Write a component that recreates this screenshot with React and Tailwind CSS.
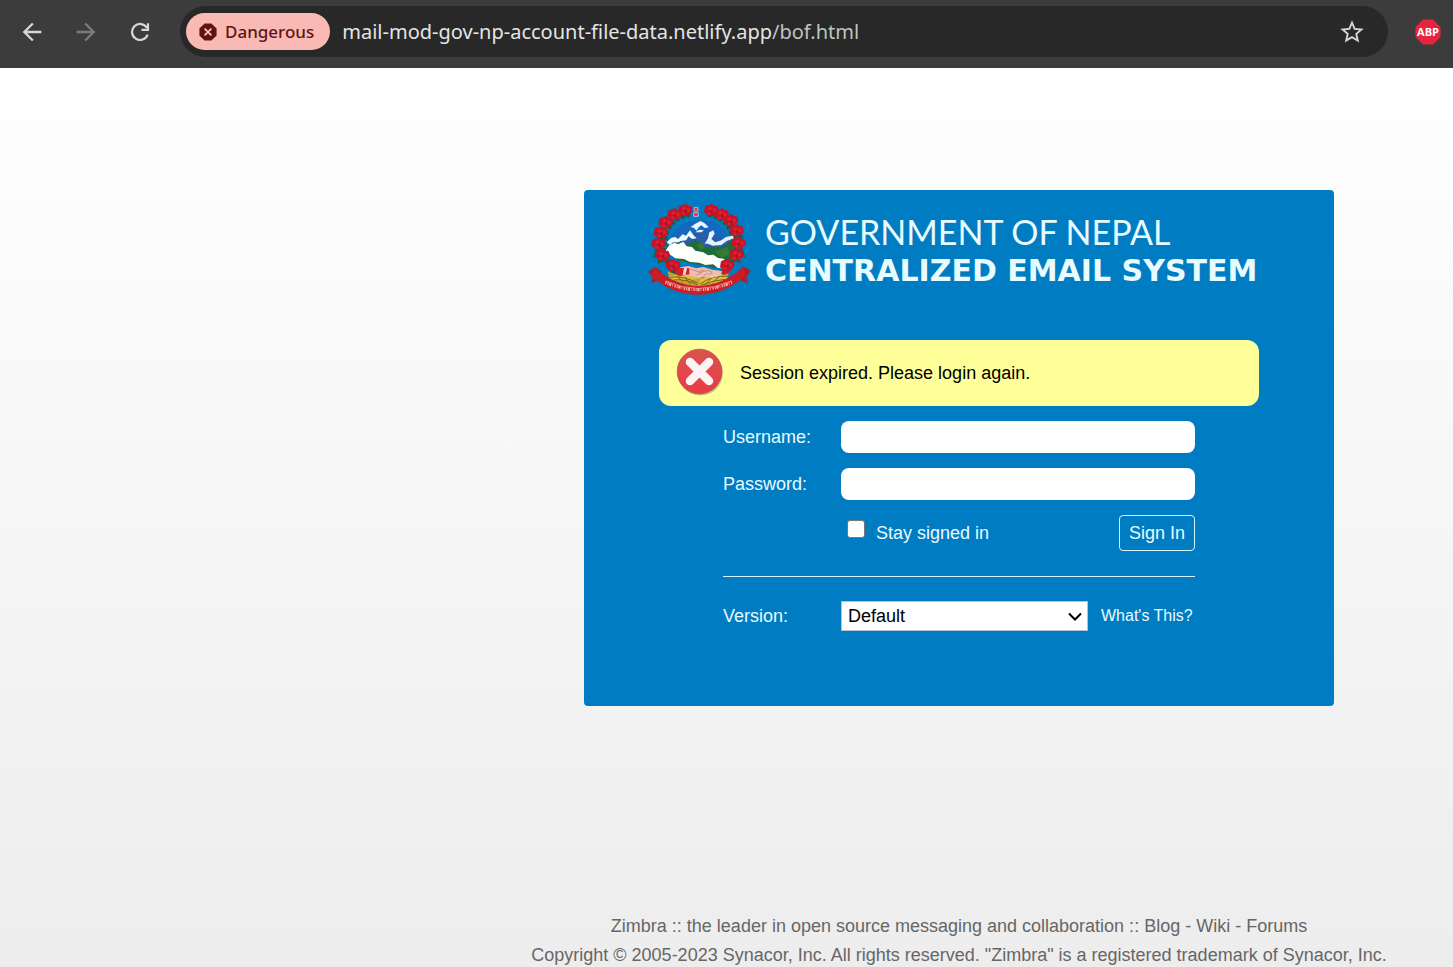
import { useState } from 'react';
import { MdArrowBack, MdArrowForward, MdStarBorder } from 'react-icons/md';

const FLOWERS = [
  [136, 47], [104, 60], [77, 84], [63, 114], [56, 148], [68, 182], [99, 212],
  [214, 47], [245, 60], [273, 78], [290, 108], [296, 146], [289, 181], [262, 212],
];

const ReloadIcon = () => (
  <svg width="20" height="20" viewBox="0 0 20 20" fill="none" stroke="currentColor" strokeWidth="2.2">
    <path d="M17.6 12.6A8 8 0 1 1 17 6" />
    <path d="M18 1.2V7.8H11.4" />
  </svg>
);

const DangerIcon = () => (
  <svg width="18" height="18" viewBox="0 0 18 18">
    <path d="M5.6 0.4h6.8l5.2 5.2v6.8l-5.2 5.2H5.6L0.4 12.4V5.6z" fill="#601410" />
    <path d="M5.6 5.6l6.8 6.8M12.4 5.6l-6.8 6.8" stroke="#f9b9b5" strokeWidth="2" />
  </svg>
);

const ErrorIcon = () => (
  <svg width="50" height="50" viewBox="0 0 50 50" className="shrink-0">
    <defs>
      <linearGradient id="disc" x1="0" y1="0" x2="0" y2="1">
        <stop offset="0" stopColor="#d9534f" />
        <stop offset="1" stopColor="#e83c46" />
      </linearGradient>
    </defs>
    <circle cx="25.5" cy="25" r="22.5" fill="#8a7a50" opacity="0.45" />
    <circle cx="24.5" cy="23.5" r="22.3" fill="url(#disc)" stroke="#c44a46" strokeWidth="0.8" />
    <path d="M15 14l19 19M34 14l-19 19" stroke="#fdf3f4" strokeWidth="8.5" strokeLinecap="round" />
  </svg>
);

const Flower = ({ x, y }) => (
  <g transform={`translate(${x} ${y}) scale(1.15)`}>
    <path d="M-17-10l6-5 5 1 7-4 7 5 7 1 4 9-2 8-6 3-3 7-9-3-6 3-5-7-7-3 1-8z" fill="#c41426" />
    <path d="M-10-6l8-5 4 6-5 6zM4-7l8 2 1 7-8 2zM-10 5l6-2 4 5-6 4z" fill="#e02032" />
    <path d="M-4 0l5-2 4 4-4 4z" fill="#a81222" />
  </g>
);

const Emblem = () => (
  <svg width="120" height="110" viewBox="0 0 360 330" className="shrink-0" role="img" aria-label="Emblem of Nepal">
    {/* wreath leaves */}
    <path
      d="M150 55Q96 64 78 110 60 160 92 214 102 234 128 238M204 55Q256 64 276 110 292 160 264 214 254 232 236 238"
      fill="none"
      stroke="#1f5c44"
      strokeWidth="20"
      strokeDasharray="13 5"
    />
    <path d="M46 162l-8 28 18-8-4 24 24-6-2-34zM308 160l8 28-18-8 4 24-24-6 4-34zM62 94l-16 34 20 4zM292 90l20 38-22 4z" fill="#245d48" />

    {/* mountains and hills */}
    <path d="M82 150C90 110 130 76 180 74s84 30 94 74l-6 44-96 20-84-26z" fill="#1468bd" />
    <path d="M88 140l22-16 24-4 16-14 12 12 16-18 14 12 18-8 14 18 20 8 26 6v18l-100 6z" fill="#2a5cac" />
    <path d="M152 96l14-10 16-8 12 7 12 12-12 2-10-8-8 6-6 10-8-8zM166 112l12-8 14 2-8 6z" fill="#eaf6ff" />
    <path d="M80 142l14-14 12-2 8 6 14-14 10 4 12-16 12 16 8 8-14 2-10-8-8 12-16 2-10 6-12-2-10 8z" fill="#eef8ff" />
    <path d="M194 146l10-16 4-18 12-6 4 10-10 16 12 10 18-6 14-10 20-4 4 8-22 8-16 12-26 2-14-6z" fill="#e4f3fd" />
    <path d="M146 146l20-10 18 4 12 18 30-4 18 4 34-24 6 38-8 40-46 8-118-24-32-42 28-12z" fill="#216b38" />
    <path d="M170 150l14-8 12 18-14 4zM222 170l40-14 8 22-24 10z" fill="#357a38" />
    <path d="M88 151l16-8 10 5 16-8 10 14 16 2 10 11 24 5 14 9 16-2 14 10 17 2 12 16-9 14-22-3-12-10-24 2-18-7-28-2-18-9-26-2-20-14-9-10z" fill="#fcfffc" />

    {/* wheat */}
    <path d="M83 229q92 40 184 0l-6 32q-86 40-172 0z" fill="#c6a12b" />
    <path d="M88 245q50-18 90 5-42 12-80 9zM178 256q35-26 85-14l-6 13q-34 13-76 10z" fill="#dfbd40" />
    <path d="M90 247q40-6 82 17M101 255q38-4 72 15M264 244q-46-4-82 22M255 253q-34 2-70 18M110 242l20 20M134 246l18 22M240 243l-22 20M216 248l-20 20" fill="none" stroke="#756321" strokeWidth="3" />

    {/* clasped hands */}
    <path d="M114 231l7-14 24-4 24 7 20-4 28 8 29 4-4 14-28 7-24-4-12 5-28-8-32-2z" fill="#efbeb2" />
    <path d="M151 222l24 8 18-6M176 233l28-7 12 6M170 241l15-8M191 242l14-8M206 239l12-5" fill="none" stroke="#cf8f84" strokeWidth="3" />
    <path d="M109 218l39 2v18l-30 6-14-10zM245 224l18-5 6 15-20 7z" fill="#d21d2c" />
    <path d="M132 218l9 1-4 20-9 2z" fill="#f5d6ce" />

    {FLOWERS.map(([x, y]) => (
      <Flower key={`${x}-${y}`} x={x} y={y} />
    ))}

    <path d="M162 38h12v10h-12zM161 53h14v11h-14z" fill="#ed2a46" stroke="#dde4ff" strokeWidth="2" />

    {/* ribbon */}
    <path d="M24 230l24-14 18 16-12 25-21 7 6-17zM332 227l-24-13-16 18 10 25 21 7-4-17z" fill="#b91722" />
    <path d="M42 219q67 53 132 54 68 0 138-57l4 26q-62 57-141 57-80 0-143-57z" fill="#c91d28" />
    <path d="M76 262q98 45 200 0" fill="none" stroke="#f3aca2" strokeWidth="8" strokeDasharray="4 3 3 2 7 3 2 5" />
    <path d="M78 258q96 45 196 0" fill="none" stroke="#f6c5ba" strokeWidth="2" />
  </svg>
);

const AdblockIcon = () => (
  <svg width="26" height="26" viewBox="0 0 26 26">
    <path d="M8 0.5h10L25.5 8v10L18 25.5H8L0.5 18V8z" fill="#e6243f" />
    <text x="13" y="17" textAnchor="middle" fill="#fff" className="font-['Open_Sans',sans-serif] text-[11px] font-bold">
      ABP
    </text>
  </svg>
);

const BrowserBar = () => (
  <header className="flex h-[68px] items-center bg-[#3c3c3c] pr-3 pb-[5px] font-['Noto_Sans','Open_Sans',sans-serif] text-[#d5d7d6]">
    <nav className="flex w-[180px] shrink-0 items-center justify-between pr-[30px] pl-[18px]">
      <button type="button" aria-label="Back"><MdArrowBack size={28} /></button>
      <button type="button" aria-label="Forward" className="mr-1 text-[#7c7c7c]"><MdArrowForward size={28} /></button>
      <button type="button" aria-label="Reload"><ReloadIcon /></button>
    </nav>
    <div className="flex h-[51px] flex-1 items-center rounded-full bg-[#282828] pr-[22px] pl-1.5">
      <button type="button" className="flex h-[37px] items-center gap-2 rounded-full bg-[#f9b9b5] pr-4 pl-[13px] text-[17px] font-medium text-[#601410]">
        <DangerIcon />
        Dangerous
      </button>
      <p className="ml-3 flex-1 text-xl text-[#e3e5e4]">
        mail-mod-gov-np-account-file-data.netlify.app<span className="text-[#bcc5c0]">/bof.html</span>
      </p>
      <button type="button" aria-label="Bookmark"><MdStarBorder size={28} /></button>
    </div>
    <button type="button" aria-label="Adblock Plus" className="ml-[27px]"><AdblockIcon /></button>
  </header>
);

const inputStyle = 'h-8 flex-1 min-w-0 rounded-lg bg-white px-2 text-black outline-none';

const LoginCard = () => {
  const [version, setVersion] = useState('default');

  return (
    <main className="mt-[122px] w-full max-w-[750px] rounded bg-[#007cc3] pt-[5px] pb-[75px] text-lg text-[#e8fbff]">
      <div className="ml-14 flex h-[110px] items-start">
        <Emblem />
        <h1 className="ml-[5px] pt-[17px] font-[Lato,sans-serif] whitespace-nowrap">
          <span className="block text-[34px] leading-10">GOVERNMENT OF NEPAL</span>
          <span className="block font-['DejaVu_Sans',sans-serif] text-[30px] leading-[38px] font-bold">CENTRALIZED EMAIL SYSTEM</span>
        </h1>
      </div>

      <div role="alert" className="mx-auto mt-[35px] flex h-[66px] w-[600px] items-center gap-[15px] rounded-xl bg-[#ffff99] pl-4 text-black">
        <ErrorIcon />
        Session expired. Please login again.
      </div>

      <form className="mx-auto mt-[15px] w-[472px]" onSubmit={(e) => e.preventDefault()}>
        <div className="flex items-center">
          <label htmlFor="username" className="w-[118px]">Username:</label>
          <input id="username" type="text" className={inputStyle} />
        </div>
        <div className="mt-[15px] flex items-center">
          <label htmlFor="password" className="w-[118px]">Password:</label>
          <input id="password" type="password" className={inputStyle} />
        </div>
        <div className="mt-[15px] flex h-9 items-center pl-[124px]">
          <input
            id="remember"
            type="checkbox"
            className="mb-2 size-[18px] appearance-none rounded-[3px] border border-[#767676] bg-white checked:bg-[#0075ff]"
          />
          <label htmlFor="remember" className="ml-[11px] flex-1">Stay signed in</label>
          <button type="submit" className="h-9 w-[76px] rounded border border-[#d8f4ff]">Sign In</button>
        </div>
        <hr className="mt-[25px] mb-6 border-[#d8f4ff]" />
        <div className="flex items-center">
          <label htmlFor="version" className="w-[118px]">Version:</label>
          <div className="relative w-[247px]">
            <select
              id="version"
              value={version}
              onChange={(e) => setVersion(e.target.value)}
              className="block h-[30px] w-full appearance-none border border-[#b5c4cf] bg-white pl-1.5 text-black"
            >
              <option value="default">Default</option>
            </select>
            <svg width="14" height="9" viewBox="0 0 14 9" className="pointer-events-none absolute top-[11px] right-1.5">
              <path d="M1 1.5l6 6 6-6" fill="none" stroke="#000" strokeWidth="2" />
            </svg>
          </div>
          <a href="#" className="ml-[13px] text-base">What's This?</a>
        </div>
      </form>
    </main>
  );
};

const App = () => (
  <div className="flex min-h-screen flex-col bg-[#ededed] font-['Liberation_Sans',Arial,sans-serif]">
    <BrowserBar />
    <div className="flex flex-1 flex-col items-center bg-linear-to-b from-white to-[#ededed] pl-[465px]">
      <LoginCard />
      <footer className="mt-auto flex flex-col items-center gap-[5px] text-lg leading-6 whitespace-nowrap text-[#666]">
        <p>
          <a href="#">Zimbra</a> :: the leader in open source messaging and collaboration :: <a href="#">Blog</a> - <a href="#">Wiki</a> - <a href="#">Forums</a>
        </p>
        <p>Copyright © 2005-2023 Synacor, Inc. All rights reserved. "Zimbra" is a registered trademark of Synacor, Inc.</p>
      </footer>
    </div>
  </div>
);

export default App;
